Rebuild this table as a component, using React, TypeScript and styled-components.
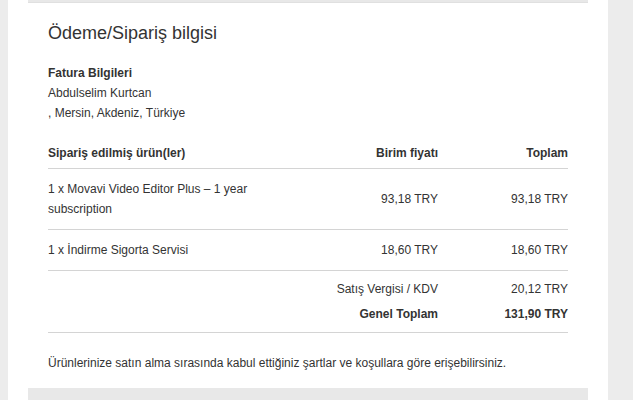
import styled, { createGlobalStyle } from "styled-components";

const GlobalStyle = createGlobalStyle`
  html, body {
    margin: 0;
    padding: 0;
    background: #ececec;
  }
  body {
    font-family: "Liberation Sans", Arial, sans-serif;
    color: #333;
  }
`;

const Page = styled.div`
  padding-left: 8px;
  height: 400px;
  overflow: hidden;
`;

const Card = styled.div`
  width: 600px;
  background: #fff;
  min-height: 400px;
`;

const Strip = styled.div`
  margin: 0 20px;
  height: ${(p: { $tall?: boolean }) => (p.$tall ? "20px" : "3px")};
  background: #e8e8e8;
  border-bottom: 1px solid #e0e0e0;
  box-sizing: border-box;
`;

const Content = styled.div`
  padding: 19px 40px 15px;
`;

const Title = styled.h2`
  margin: 0 0 19px;
  font-size: 18px;
  line-height: 22px;
  font-weight: normal;
  color: #333;
`;

const Billing = styled.div`
  font-size: 12px;
  line-height: 20px;
`;

const BillingHead = styled.div`
  font-weight: bold;
`;

const Row = styled.div<{ $head?: boolean }>`
  display: grid;
  grid-template-columns: 230px 1fr 130px;
  align-items: center;
  font-size: 12px;
  line-height: 20px;
  padding: ${(p) => (p.$head ? "10px 0 5px" : "10px 0")};
  border-bottom: 1px solid #d4d4d4;
  font-weight: ${(p) => (p.$head ? "bold" : "normal")};
`;

const Table = styled.div`
  margin-top: 10px;
`;

const Cell = styled.div<{ $right?: boolean }>`
  text-align: ${(p) => (p.$right ? "right" : "left")};
`;

const Summary = styled.div`
  display: flex;
  flex-direction: column;
  gap: 5px;
  padding: 8px 0 8px;
  border-bottom: 1px solid #d4d4d4;
`;

const SummaryLine = styled.div<{ $bold?: boolean }>`
  display: grid;
  grid-template-columns: 1fr 130px;
  font-size: 12px;
  line-height: 20px;
  text-align: right;
  font-weight: ${(p) => (p.$bold ? "bold" : "normal")};
`;

const Note = styled.p`
  margin: 20px 0 0;
  font-size: 12px;
  line-height: 20px;
`;

const items = [
  { name: "1 x Movavi Video Editor Plus – 1 year subscription", price: "93,18 TRY", total: "93,18 TRY" },
  { name: "1 x İndirme Sigorta Servisi", price: "18,60 TRY", total: "18,60 TRY" },
];

export default function App() {
  return (
    <Page>
      <GlobalStyle />
      <Card>
        <Strip />
        <Content>
          <Title>Ödeme/Sipariş bilgisi</Title>
          <Billing>
            <BillingHead>Fatura Bilgileri</BillingHead>
            <div>Abdulselim Kurtcan</div>
            <div>, Mersin, Akdeniz, Türkiye</div>
          </Billing>
          <Table>
            <Row $head>
              <Cell>Sipariş edilmiş ürün(ler)</Cell>
              <Cell $right>Birim fiyatı</Cell>
              <Cell $right>Toplam</Cell>
            </Row>
            {items.map((item, i) => (
              <Row key={i}>
                <Cell>{item.name}</Cell>
                <Cell $right>{item.price}</Cell>
                <Cell $right>{item.total}</Cell>
              </Row>
            ))}
            <Summary>
              <SummaryLine>
                <span>Satış Vergisi / KDV</span>
                <span>20,12 TRY</span>
              </SummaryLine>
              <SummaryLine $bold>
                <span>Genel Toplam</span>
                <span>131,90 TRY</span>
              </SummaryLine>
            </Summary>
          </Table>
          <Note>
            Ürünlerinize satın alma sırasında kabul ettiğiniz şartlar ve koşullara göre erişebilirsiniz.
          </Note>
        </Content>
        <Strip $tall />
      </Card>
    </Page>
  );
}
